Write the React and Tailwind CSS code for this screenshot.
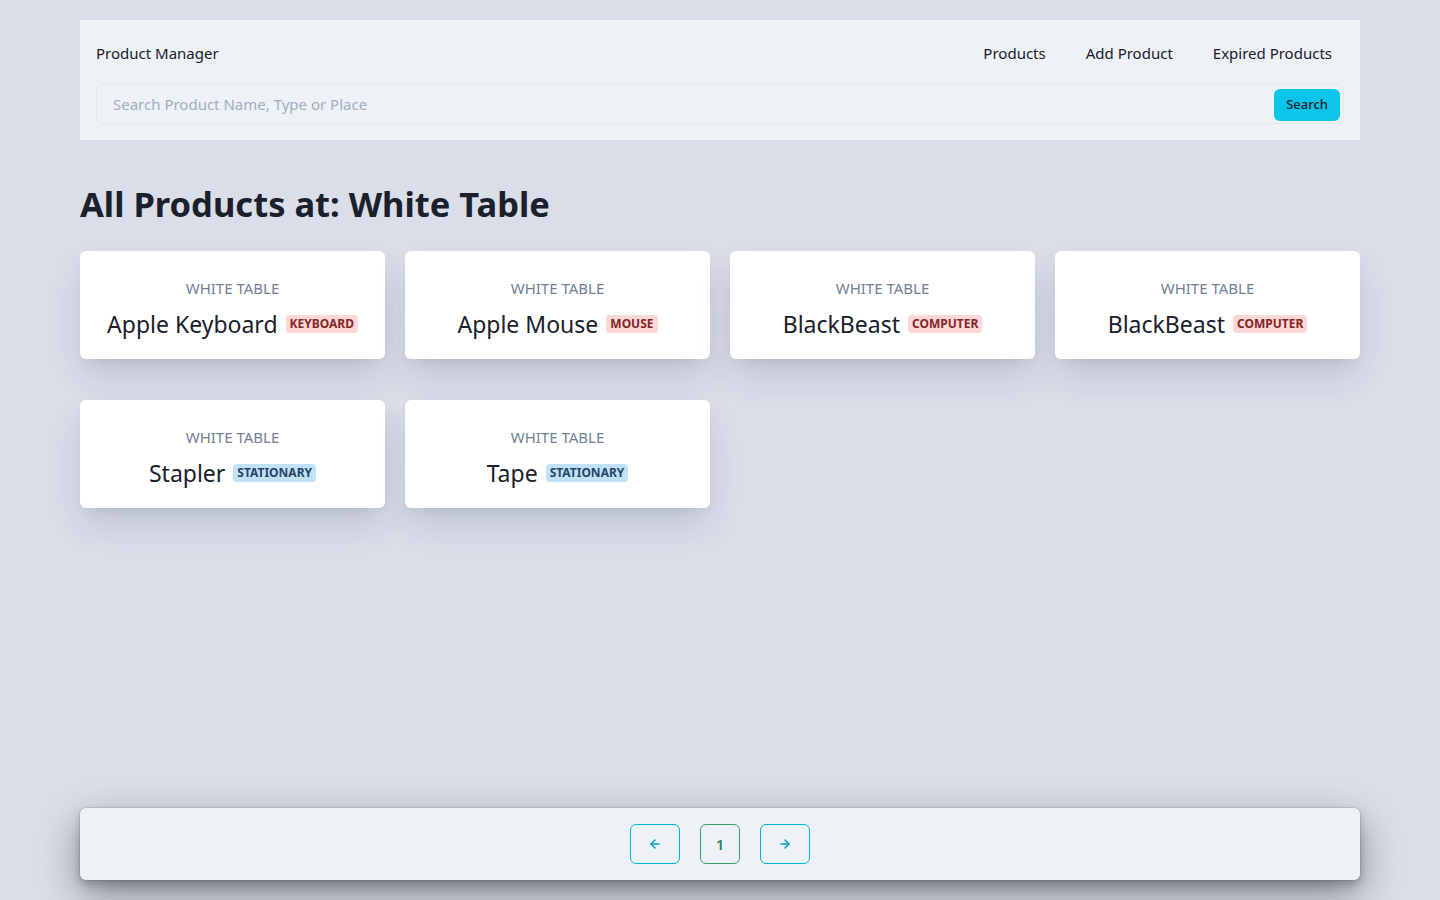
import { ArrowLeft, ArrowRight } from 'lucide-react';

const products = [
    { place: 'White Table', name: 'Apple Keyboard', type: 'keyboard' },
    { place: 'White Table', name: 'Apple Mouse', type: 'mouse' },
    { place: 'White Table', name: 'BlackBeast', type: 'computer' },
    { place: 'White Table', name: 'BlackBeast', type: 'computer' },
    { place: 'White Table', name: 'Stapler', type: 'stationary' },
    { place: 'White Table', name: 'Tape', type: 'stationary' },
];

const badgeClass = (type) =>
    type === 'stationary' ? 'bg-[#bee3f8] text-[#2a4365]' : 'bg-[#fed7d7] text-[#822727]';

export default function App() {
    return (
        <div className="min-h-screen bg-[#d9dee9] flex flex-col px-20 py-5 font-['Noto_Sans',sans-serif] text-[#1a202c]">
            <header className="bg-[#edf2f7] px-4 pt-[22px] pb-4">
                <div className="flex items-center justify-between h-[22px]">
                    <span className="text-[15px]">Product Manager</span>
                    <nav className="flex gap-10 text-[15px] pr-3">
                        <a>Products</a>
                        <a>Add Product</a>
                        <a>Expired Products</a>
                    </nav>
                </div>
                <div className="mt-[20px] flex items-center h-10 border border-[#e2e8f0] rounded-md pl-4 pr-[3px]">
                    <input
                        className="flex-1 bg-transparent outline-none text-[15px] placeholder:text-[#a0aec0]"
                        placeholder="Search Product Name, Type or Place"
                    />
                    <button className="bg-[#0bc5ea] rounded-md h-8 px-3 text-[13px] font-medium mt-[1px]">Search</button>
                </div>
            </header>

            <h1 className="text-[34.5px] font-bold mt-[37px] mb-[20px] leading-[54px]">All Products at: White Table</h1>

            <div className="grid grid-cols-4 gap-x-5 gap-y-[41px]">
                {products.map((p, i) => (
                    <div key={i} className="bg-white rounded-md h-[108px] pt-[8px] flex flex-col items-center justify-center shadow-[0_18px_36px_-4px_rgba(30,40,70,0.16),0_6px_12px_-4px_rgba(30,40,70,0.06)]">
                        <p className="text-[15px] text-[#718096] uppercase">{p.place}</p>
                        <div className="flex items-center gap-2 mt-[8px]">
                            <span className="text-[23px] leading-[34px]">{p.name}</span>
                            <span className={`text-[12px] font-bold uppercase px-1 rounded-sm leading-[18px] ${badgeClass(p.type)}`}>{p.type}</span>
                        </div>
                    </div>
                ))}
            </div>

            <footer className="mt-auto bg-[#edf2f7] rounded-md h-[72px] flex items-center justify-center gap-5 shadow-[0_0_0_1px_rgba(0,0,0,0.08),0_5px_10px_rgba(0,0,0,0.2),0_15px_40px_rgba(0,0,0,0.4)]">
                <button className="w-[50px] h-10 rounded-md border border-[#00b5d8] flex items-center justify-center text-[#00a3c4]">
                    <ArrowLeft size={14} strokeWidth={2.5} />
                </button>
                <button className="w-10 h-10 rounded-md border border-[#38a169] text-[#2f855a] text-[15px] font-semibold">1</button>
                <button className="w-[50px] h-10 rounded-md border border-[#00b5d8] flex items-center justify-center text-[#00a3c4]">
                    <ArrowRight size={14} strokeWidth={2.5} />
                </button>
            </footer>
        </div>
    );
}
